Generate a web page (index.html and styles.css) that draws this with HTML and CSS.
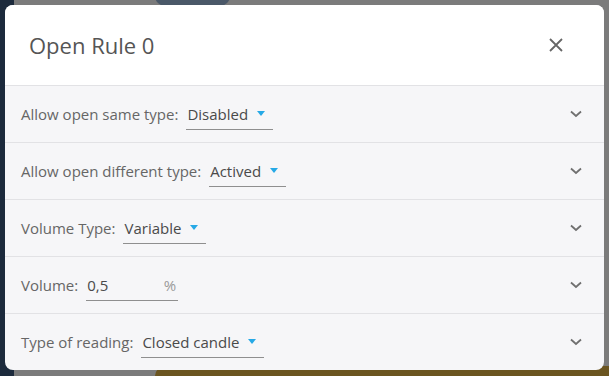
FILE: index.html
```html
<!DOCTYPE html>
<html lang="en">
<head>
  <meta charset="UTF-8">
  <meta name="viewport" content="width=device-width, initial-scale=1.0">
  <title>Open Rule 0</title>
  <link rel="stylesheet" href="styles.css">
</head>
<body>
  <div class="page-behind">
    <div class="side-strip"></div>
    <div class="top-pill"></div>
    <div class="gold-bar"></div>
  </div>

  <div class="backdrop">
    <div class="dialog">
      <div class="dialog-header">
        <h2 class="dialog-title">Open Rule 0</h2>
        <button class="close-btn" aria-label="Close">
          <svg width="16" height="16" viewBox="0 0 16 16"><path d="M2 2 L14 14 M14 2 L2 14" stroke="#666" stroke-width="1.8" fill="none"/></svg>
        </button>
      </div>

      <div class="rule-row">
        <div class="field">
          <span class="field-label">Allow open same type:</span>
          <span class="select">Disabled <span class="caret"></span></span>
        </div>
        <span class="chevron"><svg width="12" height="8" viewBox="0 0 12 8"><path d="M1 1.5 L6 6 L11 1.5" stroke="#707070" stroke-width="1.8" fill="none"/></svg></span>
      </div>

      <div class="rule-row">
        <div class="field">
          <span class="field-label">Allow open different type:</span>
          <span class="select">Actived <span class="caret"></span></span>
        </div>
        <span class="chevron"><svg width="12" height="8" viewBox="0 0 12 8"><path d="M1 1.5 L6 6 L11 1.5" stroke="#707070" stroke-width="1.8" fill="none"/></svg></span>
      </div>

      <div class="rule-row">
        <div class="field">
          <span class="field-label">Volume Type:</span>
          <span class="select">Variable <span class="caret"></span></span>
        </div>
        <span class="chevron"><svg width="12" height="8" viewBox="0 0 12 8"><path d="M1 1.5 L6 6 L11 1.5" stroke="#707070" stroke-width="1.8" fill="none"/></svg></span>
      </div>

      <div class="rule-row">
        <div class="field">
          <span class="field-label">Volume:</span>
          <span class="number-input"><span class="value">0,5</span><span class="unit">%</span></span>
        </div>
        <span class="chevron"><svg width="12" height="8" viewBox="0 0 12 8"><path d="M1 1.5 L6 6 L11 1.5" stroke="#707070" stroke-width="1.8" fill="none"/></svg></span>
      </div>

      <div class="rule-row">
        <div class="field">
          <span class="field-label">Type of reading:</span>
          <span class="select">Closed candle <span class="caret"></span></span>
        </div>
        <span class="chevron"><svg width="12" height="8" viewBox="0 0 12 8"><path d="M1 1.5 L6 6 L11 1.5" stroke="#707070" stroke-width="1.8" fill="none"/></svg></span>
      </div>
    </div>
  </div>
</body>
</html>
```

FILE: styles.css
```css
body {
  font-family: 'Open Sans', 'Noto Sans', sans-serif;
  margin: 0;
  padding: 0;
  width: 609px;
  height: 376px;
  overflow: hidden;
  background-color: #7b7b7b;
  position: relative;
}
.page-behind {
  position: absolute;
  inset: 0;
}
.side-strip {
  position: absolute;
  left: 0;
  top: 0;
  width: 14px;
  height: 376px;
  background-color: #1c2a3c;
}
.top-pill {
  position: absolute;
  left: 155px;
  top: -14px;
  width: 75px;
  height: 20px;
  border-radius: 10px;
  background-color: #4a5868;
}
.gold-bar {
  position: absolute;
  left: 155px;
  top: 366px;
  width: 454px;
  height: 20px;
  border-radius: 10px 0 0 0;
  background-color: #6b5520;
}
.backdrop {
  position: absolute;
  inset: 0;
  padding: 5px;
}
.dialog {
  width: 599px;
  background-color: #f6f6f8;
  border-radius: 8px;
  overflow: hidden;
}
.dialog-header {
  display: flex;
  justify-content: space-between;
  align-items: center;
  height: 80px;
  padding: 0 34px 0 24px;
  background-color: white;
}
.dialog-title {
  margin: 0;
  font-size: 22px;
  font-weight: 400;
  color: #555;
}
.close-btn {
  background: none;
  border: none;
  padding: 6px;
  display: flex;
  cursor: pointer;
}
.rule-row {
  display: flex;
  justify-content: space-between;
  align-items: center;
  height: 56px;
  padding: 0 22px 0 16px;
  border-top: 1px solid #e2e2e5;
}
.field {
  display: flex;
  align-items: baseline;
  gap: 8px;
  margin-top: 5px;
  font-size: 15px;
  color: #666;
}
.select,
.number-input {
  display: flex;
  align-items: baseline;
  gap: 7px;
  color: #4a4a4a;
  padding: 0 2px 5px 1px;
  border-bottom: 1px solid #8f8f8f;
}
.caret {
  align-self: center;
  width: 0;
  height: 0;
  border-left: 4px solid transparent;
  border-right: 4px solid transparent;
  border-top: 5px solid #26a9e6;
  margin: 0 6px 0 2px;
}
.number-input {
  justify-content: space-between;
  width: 89px;
}
.unit {
  color: #9a9a9a;
}
.chevron {
  display: flex;
}
```
